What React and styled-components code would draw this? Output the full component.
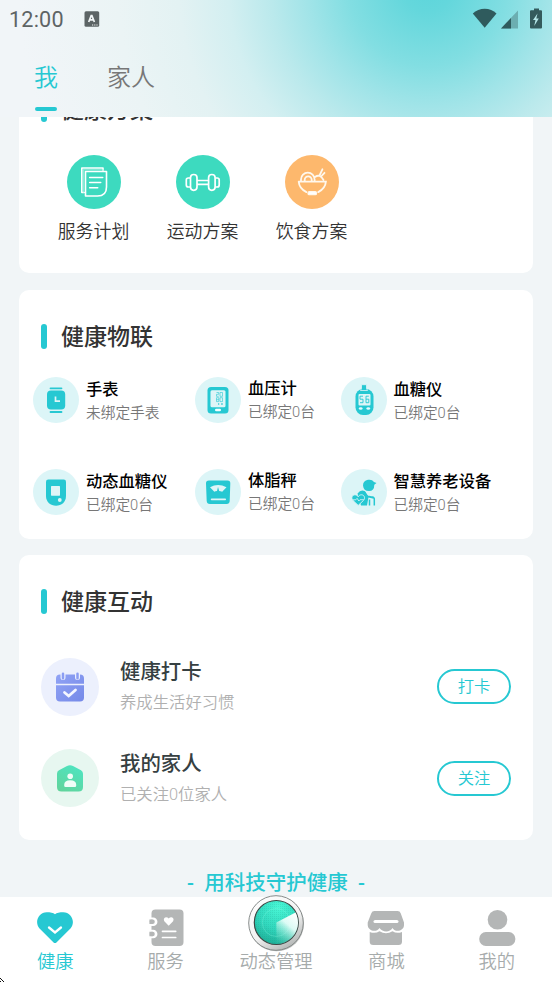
import React from "react";
import styled, { createGlobalStyle } from "styled-components";

const TEAL = "#26c8d2";

const GlobalStyle = createGlobalStyle`
  * { box-sizing: border-box; }
  body {
    margin: 0;
    background: #f1f5f7;
    font-family: Roboto, "Noto Sans CJK SC", sans-serif;
  }
`;

const Screen = styled.div`
  width: 552px;
  height: 983px;
  display: flex;
  flex-direction: column;
  overflow: hidden;
  background: #f1f5f7;
  position: relative;
`;

const Header = styled.header`
  height: 117px;
  flex: none;
  z-index: 1;
  display: flex;
  flex-direction: column;
  background: radial-gradient(
    circle at 428px -14px,
    #5cd5db 0,
    #64d7dc 26px,
    #82dee2 80px,
    #a1e4e8 121px,
    #bae9ec 157px,
    #d3eff1 200px,
    #e3f2f3 250px,
    #ebf4f5 310px,
    #f1f5f8 410px
  );
`;

const StatusBar = styled.div`
  height: 38px;
  display: flex;
  align-items: center;
  padding: 0 8px 0 9px;
`;

const Clock = styled.span`
  width: 75px;
  font-size: 21.6px;
  line-height: 38px;
  letter-spacing: 0.2px;
  padding-top: 1px;
  color: #5e6465;
`;

const StatusIcons = styled.div`
  margin-left: auto;
  display: flex;
`;

const Tabs = styled.nav`
  display: flex;
  gap: 49px;
  padding-left: 34px;
  padding-top: 21px;
`;

const Tab = styled.div`
  display: flex;
  flex-direction: column;
  align-items: center;
  gap: 10px;
  font-size: 24px;
  line-height: 38px;
  font-weight: 350;
  color: ${(p) => (p.$active ? TEAL : "#777")};

  &::after {
    content: "";
    width: 22px;
    height: 4px;
    border-radius: 2px;
    background: ${(p) => (p.$active ? TEAL : "transparent")};
  }
`;

const Content = styled.main`
  flex: 1;
  min-height: 0;
  overflow: hidden;
  padding: 0 19px;
`;

const Card = styled.section`
  height: ${(p) => p.$height}px;
  margin-top: ${(p) => p.$top}px;
  padding-top: 28px;
  border-radius: 10px;
  background: #fff;
`;

const CardTitle = styled.h2`
  margin: 0;
  padding: 4px 0 0 22px;
  height: 36px;
  display: flex;
  align-items: center;
  gap: 14px;
  font-size: 23px;
  line-height: 32px;
  font-weight: 500;
  color: #333;

  &::before {
    content: "";
    width: 6px;
    height: 25px;
    margin-bottom: 4px;
    border-radius: 3px;
    background: ${TEAL};
  }
`;

const PlanRow = styled.div`
  display: flex;
  padding: 28px 0 0 20px;
`;

const Plan = styled.div`
  width: 109px;
  display: flex;
  flex-direction: column;
  align-items: center;
  font-size: 17.9px;
  line-height: 28px;
  font-weight: 350;
  color: #333;
  gap: 9px;
`;

const Disc = styled.div`
  width: ${(p) => p.$size}px;
  height: ${(p) => p.$size}px;
  flex: none;
  border-radius: 50%;
  display: grid;
  place-items: center;
  background: ${(p) => p.$color};

  svg { display: block; }
`;

const DeviceGrid = styled.div`
  display: grid;
  grid-template-columns: 162px 145.5px 1fr;
  grid-auto-rows: 92px;
  padding: 23px 0 0 14px;
`;

const Device = styled.div`
  display: flex;
  gap: 7px;
`;

const DeviceText = styled.div`
  padding-top: ${(p) => p.$drop}px;
`;

const DeviceName = styled.div`
  font-size: 16.3px;
  line-height: 23px;
  font-weight: 500;
  color: #000;
`;

const DeviceState = styled.div`
  margin-top: 1px;
  font-size: 14.7px;
  line-height: 23px;
  font-weight: 350;
  color: #777;
`;

const ActionRow = styled.div`
  height: 91.5px;
  padding: 0 22px;
  display: flex;
  align-items: center;
`;

const Actions = styled.div`
  padding-top: 22px;
`;

const ActionText = styled.div`
  margin-left: 21px;
  padding-top: 1px;
  flex: 1;
`;

const ActionName = styled.div`
  font-size: 20.4px;
  line-height: 32px;
  font-weight: 500;
  color: #364042;
`;

const ActionNote = styled.div`
  font-size: 16.35px;
  line-height: 30px;
  font-weight: 350;
  color: #b0b0b0;
`;

const PillButton = styled.button`
  width: 74px;
  height: 35px;
  padding: 1px 0 0;
  border: 1.5px solid ${TEAL};
  border-width: 2px;
  border-radius: 18px;
  background: #fff;
  color: ${TEAL};
  font: 350 16.3px/30px Roboto, "Noto Sans CJK SC", sans-serif;
`;

const Slogan = styled.p`
  margin: 28px 0 0;
  text-align: center;
  white-space: pre;
  font-size: 20.5px;
  line-height: 30px;
  font-weight: 500;
  color: ${TEAL};
`;

const BottomNav = styled.nav`
  height: 86px;
  flex: none;
  display: grid;
  grid-template-columns: repeat(5, 1fr);
  background: #fff;
`;

const NavItem = styled.div`
  display: flex;
  flex-direction: column;
  align-items: center;
  font-size: 18.3px;
  line-height: 30px;
  font-weight: 350;
  color: ${(p) => (p.$active ? TEAL : "#a6abab")};
`;

const NavIcon = styled.div`
  height: 50px;
  display: grid;
  place-items: center;
  padding-top: 12px;

  svg { display: block; }
`;

const RadarSlot = styled.div`
  height: 50px;
  z-index: 1;

  svg { display: block; margin-top: -3px; }
`;

const Cursor = styled.svg`
  position: absolute;
  left: 0;
  bottom: 0;
`;

const KeyboardBadge = () => (
  <svg width="16" height="17" viewBox="0 0 16 17">
    <rect x="0.5" y="0.2" width="14.7" height="15.6" rx="1.5" fill="#5c6465" />
    <path d="M4.7 11 7.2 4.600h.7l2.500 6.400M5.700 8.800h3.800" fill="none" stroke="#f1f5f6" strokeWidth="1.700" />
    <path d="M8 14h1.200m1 0h1.200m1 0h1.200" stroke="#f1f5f6" strokeWidth="1.100" />
  </svg>
);

const StatusGlyphs = () => (
  <svg width="72" height="24" viewBox="0 0 72 24">
    <path d="M.8 6.2C7-.2 18.500-.2 24.500 6.200L12.700 20.500Z" transform="translate(0 .3)" fill="#2f5b5d" />
    <path d="M29 21.500 46 3.500v18Z" fill="#6caeb1" />
    <path d="M29 21.500 39 11v10.500Z" fill="#2f5b5d" />
    <path d="M58 4.200q0-1 1-1h3V1.500h5v1.700h2q1 0 1 1v16.300q0 1-1 1H59q-1 0-1-1Z" fill="#345a5c" />
    <path d="M65.500 6.500 61 13h2.500l-1.300 6 4.600-7.500h-2.500Z" fill="#b5e6e8" />
  </svg>
);

const PlanIcon = () => (
  <svg width="54" height="54" viewBox="0 0 54 54" fill="none" stroke="#fff" strokeWidth="1.6" strokeLinejoin="round" strokeLinecap="round">
    <path d="M36 15.200v-2.200H14.800v24.500h2.500" />
    <path d="M18.500 16.500H39.500V32q0 9-9 9H18.500Z" />
    <path d="M16.700 14.800v22.700M16.700 14.800H36" stroke="#b4f1e5" strokeWidth=".8" />
    <path d="M22.700 22.500h13M22.700 27.500h11M22.700 32.700h8" />
  </svg>
);

const DumbbellIcon = () => (
  <svg width="54" height="54" viewBox="0 0 54 54" fill="none" stroke="#fff" strokeWidth="1.700" strokeLinejoin="round">
    <rect x="14.500" y="19.500" width="6.500" height="15.800" rx="3.200" />
    <rect x="32.600" y="19.500" width="6.500" height="15.800" rx="3.200" />
    <path d="M21 25.500h11.600M21 29.400h11.600M14 23h-1.700q-2 0-2 2v5q0 2 2 2H14M39.500 23h1.700q2 0 2 2v5q0 2-2 2h-1.700" />
  </svg>
);

const BowlIcon = () => (
  <svg width="54" height="54" viewBox="0 0 54 54" fill="none" stroke="#fff8ed" strokeWidth="1.800" strokeLinecap="round">
    <path d="M13.700 26.700h27.200q-.6 7-7.700 10.400M13.700 26.700q.6 7 7.700 10.400" />
    <path d="M16 26v-1.500a6.800 6.800 0 0 1 13.600 0V26M19.700 26v-1.200a3.500 3.500 0 0 1 7 0V26M30 22q5-3.500 8.500 3M34.500 20.500l2.900-6.200M36.500 21l3-3.200" />
    <rect x="23" y="36.700" width="8.500" height="3" rx="1.300" fill="#fff" strokeWidth="1.200" />
  </svg>
);

const WatchIcon = () => (
  <svg width="46" height="46" viewBox="0 0 46 46" fill={TEAL}>
    <rect x="14" y="13.500" width="18.200" height="19" rx="4" />
    <path d="M17.500 11.300h11M17.500 35h11" stroke={TEAL} strokeWidth="1.800" strokeLinecap="round" />
    <path d="M22.500 19.500v4.700H27" fill="none" stroke="#def5f7" strokeWidth="1.700" />
  </svg>
);

const PressureIcon = () => (
  <svg width="46" height="46" viewBox="0 0 46 46" fill={TEAL}>
    <rect x="12.500" y="10" width="21" height="26.500" rx="3.500" />
    <rect x="15.500" y="13.300" width="15" height="17" rx="1.500" fill="#def5f7" />
    <path d="M21.500 15.500h2.200v1.800h-2.200v2h2.200M25 15.500h2.500v3.800H25ZM21.500 20.700h2.300v3.900h-2.300Zm0 2h2.300M25 20.700h2.500v3.900H25ZM23 26.500h1v1h-1m3-1h1.500v1H26" fill="none" stroke={TEAL} strokeWidth=".6" />
    <rect x="20" y="31.800" width="6" height="2.500" rx="1.200" fill="#f1ffff" />
  </svg>
);

const GlucoseIcon = () => (
  <svg width="46" height="46" viewBox="0 0 46 46" fill={TEAL}>
    <rect x="14.500" y="12" width="18" height="26" rx="7.500" />
    <path d="M20.500 7.700h5v3.800l1 2h-7l1-2Z" stroke="#def5f7" strokeWidth=".8" />
    <rect x="17.500" y="17" width="12" height="11.500" rx="1" fill="#def5f7" />
    <path d="M22 19.200h-3v3h3v3.500h-3M27.800 19.200H25v6.500h2.800v-3.500H25" fill="none" stroke={TEAL} strokeWidth=".9" />
    <ellipse cx="19.700" cy="31.500" rx="1.900" ry="1.300" fill="#e6faff" />
    <ellipse cx="27.300" cy="31.500" rx="1.900" ry="1.300" fill="#e6faff" />
  </svg>
);

const SensorIcon = () => (
  <svg width="46" height="46" viewBox="0 0 46 46" fill={TEAL}>
    <path d="M13 12.800q0-2.300 2.300-2.300h15.500q2.200 0 2.200 2.300V27c0 6-4.500 9.800-10 9.800S13 33 13 27Z" />
    <rect x="18" y="17" width="9" height="9.700" rx=".6" fill="#def5f7" />
    <circle cx="26.800" cy="31" r="1.900" fill="#def5f7" />
  </svg>
);

const ScaleIcon = () => (
  <svg width="46" height="46" viewBox="0 0 46 46" fill={TEAL}>
    <path d="M14 11.500h18.500q3 0 2.800 3L34.700 32q-.2 3-3 3H14.900q-3 0-3.200-3L11 14.500q-.2-3 3-3Z" />
    <path d="M15 18.200q8-4.500 16.500 0l-4.300 4.600q-1.700-.9-3-.9l-1.200-4-1 4q-1.800 0-2.700.9Z" fill="#def5f7" />
    <rect x="15.800" y="29.500" width="15.200" height="1.700" rx=".8" fill="#def5f7" />
  </svg>
);

const ElderIcon = () => (
  <svg width="46" height="46" viewBox="0 0 46 46">
    <path d="M22 16.500q0-4.700 5-5.700 4-.8 6 2.200l2.500 1-2.200 1.700q0 6.300-5.300 6.300-5.500 0-6-5.500Z" fill={TEAL} />
    <path d="M16.500 24.500q3-4 7-2.500 1.300.5 1.800 2.500l2.200 3.500-1.500 8.500h-6Z" fill={TEAL} />
    <path d="m23.500 23.500 3 4 5.500 1" fill="none" stroke={TEAL} strokeWidth="1.800" strokeLinecap="round" />
    <path d="M28.500 36.500V30.500M33.300 36.500v-6.200q0-2-2-2" fill="none" stroke={TEAL} strokeWidth="1.500" />
    <path d="M17.200 36.400 12 31.500c-2.200-2.400-.9-5.700 1.900-5.700 1.500 0 2.600.7 3.300 1.900.7-1.200 1.800-1.900 3.300-1.900 2.800 0 4.100 3.300 1.900 5.700Z" fill={TEAL} stroke="#def5f7" strokeWidth=".9" />
    <path d="M11.500 30.800h3.300l1.300-1.500 1.700 2.700 1.300-1.300h3.700" fill="none" stroke="#def5f7" strokeWidth=".8" />
  </svg>
);

const CalendarIcon = () => (
  <svg width="58" height="58" viewBox="0 0 58 58">
    <defs>
      <linearGradient id="calendarFill" x2="1" y2="1">
        <stop stopColor="#91a3f5" /><stop offset="1" stopColor="#7589e8" />
      </linearGradient>
    </defs>
    <rect x="15" y="16.500" width="28" height="27" rx="4" fill="url(#calendarFill)" />
    <path d="M22 16v3.500M36.500 16v3.500" stroke="#ecf0fd" strokeWidth="5" strokeLinecap="round" />
    <path d="M22 15.700v4.500M36.500 15.700v4.500" stroke="#8b9df3" strokeWidth="2.500" strokeLinecap="round" />
    <path d="M15 26.500h28" stroke="#ecf0fd" strokeWidth="1.500" />
    <path d="m23.500 34.500 4.200 3.500 6.800-6" fill="none" stroke="#f4f6ff" strokeWidth="2.800" strokeLinecap="round" />
  </svg>
);

const HomeIcon = () => (
  <svg width="58" height="58" viewBox="0 0 58 58">
    <defs>
      <linearGradient id="homeFill" x1=".7" y1="0" x2=".2" y2="1">
        <stop stopColor="#4ee4c0" /><stop offset="1" stopColor="#61d49c" />
      </linearGradient>
    </defs>
    <path d="m26 17-8 4.300q-2 1-2 3.400V38q0 4.500 4.500 4.500h17Q42 42.500 42 38V24.700q0-2.300-2-3.400L32 17q-3-1.700-6 0Z" fill="url(#homeFill)" />
    <circle cx="29.200" cy="27.300" r="2.800" fill="#effdf7" />
    <path d="M23.200 36.700v-1q0-4.500 6-4.500t6 4.500v1q0 1.300-1.300 1.300h-9.400q-1.300 0-1.300-1.300Z" fill="#effdf7" />
  </svg>
);

const HeartIcon = () => (
  <svg width="38" height="38" viewBox="0 0 38 38">
    <path d="M17.300 33.200 3.300 19.200C-2 12.500 3 3.200 10.700 3.200c3.700 0 6.600.5 8.300 2 1.700-1.500 4.600-2 8.300-2C35 3.200 40 12.500 34.700 19.200l-14 14q-1.700 1.700-3.400 0Z" fill={TEAL} />
    <path d="m13 18.500 6 5 6-5" fill="none" stroke="#fff" strokeWidth="2.300" strokeLinecap="round" />
  </svg>
);

const ServiceIcon = () => (
  <svg width="38" height="38" viewBox="0 0 38 38">
    <rect x="4.500" y=".5" width="32" height="36.500" rx="4" fill="#b4b6b6" />
    <path d="M3 12.700h3.200M3 25h3.200" stroke="#fff" strokeWidth="8.500" strokeLinecap="round" />
    <path d="M2.400 12.700h3M2.400 25h3" stroke="#b4b6b6" strokeWidth="4.600" />
    <path d="M5 12.700h.5M5 25h.5" stroke="#b4b6b6" strokeWidth="4.600" strokeLinecap="round" />
    <path d="m21.700 16.800-4.400-4.500q-1.500-3.200 1.700-4 1.700 0 2.700 1.200 1-1.200 2.700-1.200 3.200.8 1.700 4Z" fill="#fff" />
    <path d="M15.500 22.300h13.200M15.500 28.500h13.200" stroke="#fff" strokeWidth="1.700" strokeLinecap="round" />
  </svg>
);

const ShopIcon = () => (
  <svg width="38" height="38" viewBox="0 0 38 38" fill="#b4b6b6">
    <path d="M7.500 2h23q2.500 0 3.300 2.400L37 13.500v2.800c-.3 6-8.800 7.500-11.500 2.700-2.500 4.500-10 4.500-13 0C9.500 23.800 1.300 22.300.7 16.300v-2.800L4.200 4.400Q5 2 7.500 2Z" />
    <path d="M2.700 23q5.500 2 9.800-.7 6.500 4 13 0 4.300 2.700 9.500.7v9.500q0 3.500-3.500 3.500H6.200q-3.500 0-3.500-3.500Z" />
    <rect x="6.500" y="10.900" width="25" height="3.200" rx="1.600" fill="#fff" />
  </svg>
);

const PersonIcon = () => (
  <svg width="38" height="38" viewBox="0 0 38 38" fill="#b4b6b6">
    <circle cx="19.500" cy="10.700" r="9.800" />
    <rect x="1.300" y="23" width="36" height="14" rx="6.500" />
  </svg>
);

const RadarIcon = () => (
  <svg width="60" height="60" viewBox="0 0 60 60">
    <defs>
      <linearGradient id="rim" x2=".6" y2="1">
        <stop stopColor="#fff" /><stop offset=".65" stopColor="#f2f2f2" /><stop offset="1" stopColor="#b9bcbb" />
      </linearGradient>
      <radialGradient id="dial" cx=".55" cy=".15" r=".9">
        <stop stopColor="#49f7d6" /><stop offset=".55" stopColor="#31d7bd" /><stop offset="1" stopColor="#1caa93" />
      </radialGradient>
      <linearGradient id="beam" x1=".8" y1="0" x2=".2" y2="1">
        <stop stopColor="#fff" /><stop offset=".4" stopColor="#effffb" stopOpacity=".9" /><stop offset="1" stopColor="#67dec5" stopOpacity=".1" />
      </linearGradient>
      <pattern id="mesh" width="2" height="2" patternUnits="userSpaceOnUse">
        <rect width="1" height="1" fill="#168f80" opacity=".16" />
      </pattern>
    </defs>
    <circle cx="30.500" cy="29.800" r="27.500" fill="#777c7b" opacity=".45" />
    <circle cx="30" cy="29" r="27.300" fill="url(#rim)" stroke="#7b807f" strokeWidth=".9" />
    <circle cx="30.300" cy="28.500" r="22" fill="url(#dial)" stroke="#3c4744" strokeWidth="1.200" />
    <circle cx="30.300" cy="28.500" r="21.200" fill="url(#mesh)" />
    <circle cx="30.300" cy="28.500" r="14" fill="none" stroke="#8effea" strokeWidth=".6" opacity=".45" />
    <path d="M30.300 28.500 49.500 18.500A21.300 21.300 0 0 1 30.300 49.800Z" fill="url(#beam)" />
  </svg>
);

const plans = [
  { label: "服务计划", color: "#3ddabf", Icon: PlanIcon },
  { label: "运动方案", color: "#3ddabf", Icon: DumbbellIcon },
  { label: "饮食方案", color: "#fdb86d", Icon: BowlIcon },
];

const devices = [
  { name: "手表", state: "未绑定手表", Icon: WatchIcon, drop: 1 },
  { name: "血压计", state: "已绑定0台", Icon: PressureIcon, drop: 0 },
  { name: "血糖仪", state: "已绑定0台", Icon: GlucoseIcon, drop: 1 },
  { name: "动态血糖仪", state: "已绑定0台", Icon: SensorIcon, drop: 1 },
  { name: "体脂秤", state: "已绑定0台", Icon: ScaleIcon, drop: 0 },
  { name: "智慧养老设备", state: "已绑定0台", Icon: ElderIcon, drop: 1 },
];

const actions = [
  { name: "健康打卡", note: "养成生活好习惯", button: "打卡", color: "#ecf0fd", Icon: CalendarIcon },
  { name: "我的家人", note: "已关注0位家人", button: "关注", color: "#e7f7f0", Icon: HomeIcon },
];

export default function App() {
  return (
    <Screen>
      <GlobalStyle />
      <Header>
        <StatusBar>
          <Clock>12:00</Clock>
          <KeyboardBadge />
          <StatusIcons><StatusGlyphs /></StatusIcons>
        </StatusBar>
        <Tabs>
          <Tab $active>我</Tab>
          <Tab>家人</Tab>
        </Tabs>
      </Header>

      <Content>
        <Card $top={-54} $height={210}>
          <CardTitle>健康方案</CardTitle>
          <PlanRow>
            {plans.map(({ label, color, Icon }) => (
              <Plan key={label}>
                <Disc $size={54} $color={color}><Icon /></Disc>
                {label}
              </Plan>
            ))}
          </PlanRow>
        </Card>

        <Card $top={17} $height={249}>
          <CardTitle>健康物联</CardTitle>
          <DeviceGrid>
            {devices.map(({ name, state, Icon, drop }) => (
              <Device key={name}>
                <Disc $size={46} $color="#dcf5f7"><Icon /></Disc>
                <DeviceText $drop={drop}>
                  <DeviceName>{name}</DeviceName>
                  <DeviceState>{state}</DeviceState>
                </DeviceText>
              </Device>
            ))}
          </DeviceGrid>
        </Card>

        <Card $top={16} $height={285}>
          <CardTitle>健康互动</CardTitle>
          <Actions>
            {actions.map(({ name, note, button, color, Icon }) => (
              <ActionRow key={name}>
                <Disc $size={58} $color={color}><Icon /></Disc>
                <ActionText>
                  <ActionName>{name}</ActionName>
                  <ActionNote>{note}</ActionNote>
                </ActionText>
                <PillButton>{button}</PillButton>
              </ActionRow>
            ))}
          </Actions>
        </Card>

        <Slogan>{"-  用科技守护健康  -"}</Slogan>
      </Content>

      <BottomNav>
        <NavItem $active><NavIcon><HeartIcon /></NavIcon>健康</NavItem>
        <NavItem><NavIcon><ServiceIcon /></NavIcon>服务</NavItem>
        <NavItem><RadarSlot><RadarIcon /></RadarSlot>动态管理</NavItem>
        <NavItem><NavIcon><ShopIcon /></NavIcon>商城</NavItem>
        <NavItem><NavIcon><PersonIcon /></NavIcon>我的</NavItem>
      </BottomNav>

      <Cursor width="5" height="5" viewBox="0 0 5 5">
        <path d="M0 0h1v1H0ZM1 1h1v1H1ZM2 2h1v1H2ZM0 3h1v1H0ZM3 3h1v1H3Z" fill="#111" />
      </Cursor>
    </Screen>
  );
}
